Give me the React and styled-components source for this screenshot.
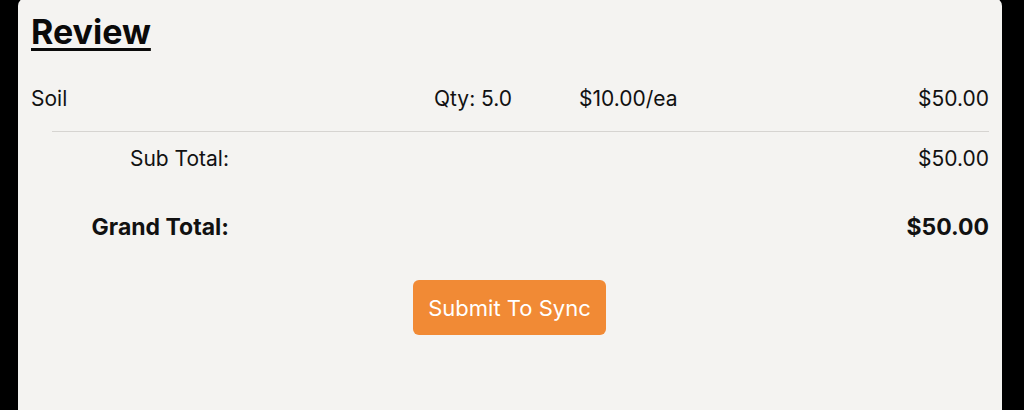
import styled, { createGlobalStyle } from "styled-components";

const GlobalStyle = createGlobalStyle`
  html, body {
    margin: 0;
    padding: 0;
    background: #000;
    height: 410px;
    overflow: hidden;
  }
  body {
    font-family: Inter, "Noto Sans", "Liberation Sans", sans-serif;
    color: #111;
  }
`;

const Screen = styled.div`
  height: 410px;
  padding: 0 22px 0 18px;
  box-sizing: border-box;
  display: flex;
`;

const Panel = styled.div`
  flex: 1;
  background: #f4f3f1;
  border-radius: 8px 8px 0 0;
  margin-top: -2px;
  padding: 15px 13px 0 13px;
  display: flex;
  flex-direction: column;
`;

const Title = styled.h1`
  margin: 0;
  font-size: 34px;
  font-weight: 700;
  line-height: 38px;
  text-decoration: underline;
  text-decoration-thickness: 3px;
  text-underline-offset: 4px;
  color: #0a0a0a;
`;

const ItemRow = styled.div`
  display: grid;
  grid-template-columns: 403px 145px 1fr auto;
  align-items: center;
  margin-top: 37px;
  font-size: 21px;
  line-height: 22px;
`;

const Divider = styled.div`
  height: 1px;
  background: #d6d4d1;
  margin: 21px 0 0 21px;
`;

const TotalRow = styled.div`
  display: grid;
  grid-template-columns: 198px 1fr;
  align-items: center;
  margin-top: ${(p) => p.$gap}px;
  font-size: ${(p) => (p.$bold ? 23 : 21)}px;
  font-weight: ${(p) => (p.$bold ? 700 : 400)};
  line-height: 22px;
`;

const Label = styled.span`
  text-align: right;
`;

const Value = styled.span`
  text-align: right;
`;

const ButtonWrap = styled.div`
  display: flex;
  justify-content: center;
  margin-top: 42px;
  padding-right: 1px;
`;

const SubmitButton = styled.button`
  width: 193px;
  height: 55px;
  border: none;
  border-radius: 6px;
  background: #f18a35;
  color: #fff;
  font-family: inherit;
  font-size: 22px;
  cursor: pointer;
`;

export default function App() {
  return (
    <>
      <GlobalStyle />
      <Screen>
        <Panel>
          <Title>Review</Title>
          <ItemRow>
            <span>Soil</span>
            <span>Qty: 5.0</span>
            <span>$10.00/ea</span>
            <Value>$50.00</Value>
          </ItemRow>
          <Divider />
          <TotalRow $gap={16}>
            <Label>Sub Total:</Label>
            <Value>$50.00</Value>
          </TotalRow>
          <TotalRow $gap={46} $bold>
            <Label>Grand Total:</Label>
            <Value>$50.00</Value>
          </TotalRow>
          <ButtonWrap>
            <SubmitButton>Submit To Sync</SubmitButton>
          </ButtonWrap>
        </Panel>
      </Screen>
    </>
  );
}
